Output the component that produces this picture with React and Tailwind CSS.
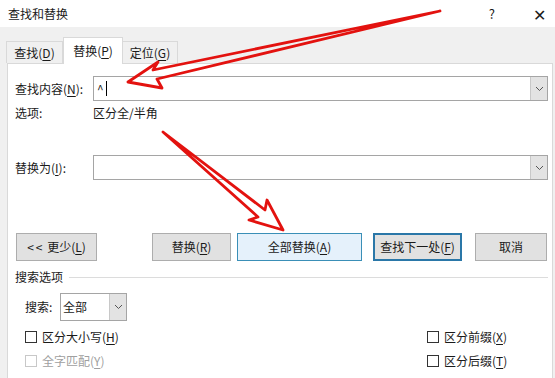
import React from "react";

const U = ({ children }) => <span className="underline underline-offset-2">{children}</span>;

function Chevron() {
  return (
    <svg width="9" height="6" viewBox="0 0 9 6" className="block">
      <path d="M1 1 L4.5 4.5 L8 1" fill="none" stroke="#555" strokeWidth="1" />
    </svg>
  );
}

function Combo({ children, className = "" }) {
  return (
    <div className={"flex h-[25px] border border-[#a5a5a5] bg-white " + className}>
      <div className="flex-1 flex items-center pl-[3px]">{children}</div>
      <div className="w-[17px] bg-[#e3e3e3] border-l border-[#c8c8c8] flex items-center justify-center">
        <Chevron />
      </div>
    </div>
  );
}

function Btn({ children, className = "" }) {
  return (
    <div className={"h-[28px] flex items-center justify-center " + className}>{children}</div>
  );
}

function Check({ label, disabled }) {
  return (
    <div className={"flex items-center h-[16px] " + (disabled ? "text-[#a0a0a0]" : "text-[#1a1a1a]")}>
      <div className={"w-[12px] h-[12px] border bg-white " + (disabled ? "border-[#c8c8c8]" : "border-[#333]")} />
      <span className="ml-[5px]">{label}</span>
    </div>
  );
}

export default function App() {
  return (
    <div
      className="relative w-[555px] h-[378px] overflow-hidden bg-[#f0f0f0] text-[12px] leading-[16px] text-[#1a1a1a] flex flex-col"
      style={{ fontFamily: '"Noto Sans CJK SC", "Noto Sans", sans-serif' }}
    >
      {/* title bar */}
      <div className="h-[27px] bg-white flex items-center shrink-0">
        <span className="ml-[8px]">查找和替换</span>
        <span className="ml-auto mr-[38px] text-[13px]">?</span>
        <span className="mr-[9px] text-[16px] font-light">✕</span>
      </div>

      {/* tabs */}
      <div className="h-[36px] shrink-0 flex items-end pl-[6px]">
        <div className="h-[22px] w-[57px] border border-b-0 border-[#d9d9d9] bg-[#f0f0f0] flex items-center justify-center">
          查找(<U>D</U>)
        </div>
        <div className="h-[27px] w-[60px] border border-b-0 border-[#d9d9d9] bg-white flex items-center justify-center -mb-[1px] relative z-10">
          替换(<U>P</U>)
        </div>
        <div className="h-[22px] w-[55px] border border-b-0 border-l-0 border-[#d9d9d9] bg-[#f0f0f0] flex items-center justify-center">
          定位(<U>G</U>)
        </div>
      </div>

      {/* panel */}
      <div className="flex-1 ml-[7px] mr-[2px] bg-white border border-[#d9d9d9] border-b-0 pl-[7px] pr-[4px] flex flex-col">
        <div className="mt-[12px] flex items-center h-[25px]">
          <div className="w-[78px]">查找内容(<U>N</U>):</div>
          <Combo className="flex-1">
            <span className="text-[12px]">^</span>
            <span className="ml-[2px] w-[1px] h-[15px] bg-black" />
          </Combo>
        </div>
        <div className="mt-[4px] flex items-center h-[16px]">
          <div className="w-[78px]">选项:</div>
          <div>区分全/半角</div>
        </div>
        <div className="mt-[34px] flex items-center h-[25px]">
          <div className="w-[78px]">替换为(<U>I</U>):</div>
          <Combo className="flex-1" />
        </div>

        {/* buttons */}
        <div className="mt-[53px] flex items-center h-[28px]">
          <Btn className="ml-[1px] w-[81px] bg-[#e1e1e1] border border-[#adadad]">
            <span className="tracking-[2px]">&lt;&lt;</span>&nbsp;更少(<U>L</U>)
          </Btn>
          <Btn className="ml-[55px] w-[79px] bg-[#e1e1e1] border border-[#adadad]">
            替换(<U>R</U>)
          </Btn>
          <Btn className="ml-[6px] w-[125px] bg-[#e5f1fb] border border-[#3a8fb7]">
            全部替换(<U>A</U>)
          </Btn>
          <Btn className="ml-[11px] w-[89px] bg-[#e1e1e1] border-2 border-[#2a77a8]">
            查找下一处(<U>F</U>)
          </Btn>
          <Btn className="ml-[13px] w-[72px] bg-[#e1e1e1] border border-[#adadad]">
            取消
          </Btn>
        </div>

        {/* search options */}
        <div className="mt-[8px] flex items-center h-[16px]">
          <span>搜索选项</span>
          <div className="flex-1 ml-[6px] h-px bg-[#dcdcdc]" />
        </div>
        <div className="mt-[8px] flex items-center h-[28px] pl-[10px]">
          <span className="w-[35px]">搜索:</span>
          <div className="flex h-[28px] w-[67px] border border-[#a5a5a5] bg-white">
            <div className="flex-1 flex items-center pl-[2px]">全部</div>
            <div className="w-[17px] bg-[#e3e3e3] border-l border-[#c8c8c8] flex items-center justify-center">
              <Chevron />
            </div>
          </div>
        </div>
        <div className="mt-[8px] flex items-center pl-[10px]">
          <div className="w-[402px]">
            <Check label={<>区分大小写(<U>H</U>)</>} />
          </div>
          <Check label={<>区分前缀(<U>X</U>)</>} />
        </div>
        <div className="mt-[8px] flex items-center pl-[10px]">
          <div className="w-[402px]">
            <Check disabled label={<>全字匹配(<U>Y</U>)</>} />
          </div>
          <Check label={<>区分后缀(<U>T</U>)</>} />
        </div>
      </div>

      {/* red annotation arrows */}
      <svg className="absolute inset-0 pointer-events-none z-20" width="555" height="378" viewBox="0 0 555 378">
        <polygon
          points="440,11 153,70 158,62 128,82 162,88 157,79"
          fill="none"
          stroke="#e3120f"
          strokeWidth="2.8"
          strokeLinejoin="round"
        />
        <polygon
          points="163,132 265,210 267,200 283,230 249,220 258,217"
          fill="none"
          stroke="#e3120f"
          strokeWidth="2.8"
          strokeLinejoin="round"
        />
      </svg>
    </div>
  );
}
